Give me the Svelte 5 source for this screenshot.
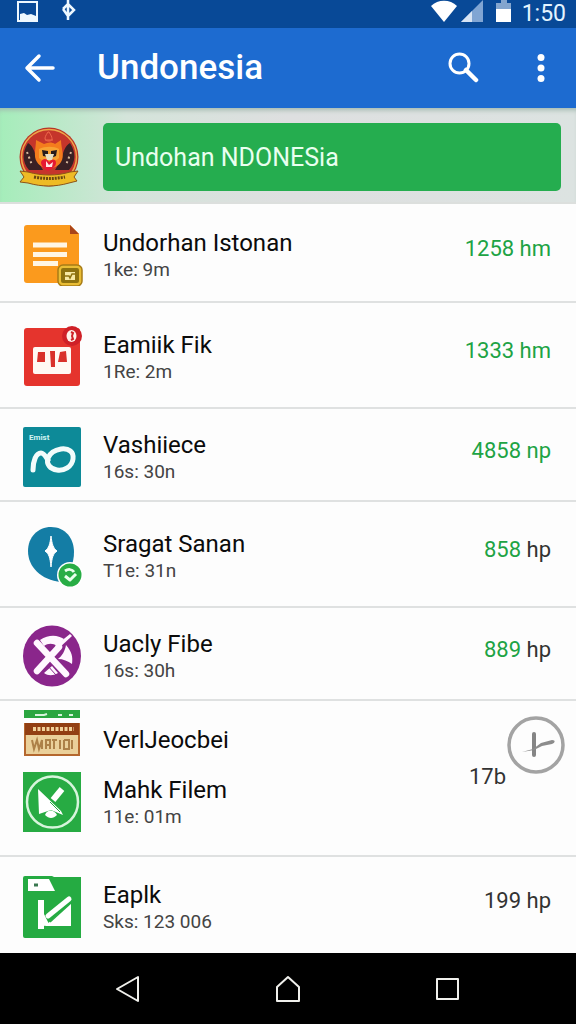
<script lang="ts">
	const items = [
		{ icon: "document", title: "Undorhan Istonan", detail: "1ke: 9m", amount: "1258", unit: "hm", tone: "green", size: "" },
		{ icon: "ticket", title: "Eamiik Fik", detail: "1Re: 2m", amount: "1333", unit: "hm", tone: "green", size: "roomy" },
		{ icon: "loop", title: "Vashiiece", detail: "16s: 30n", amount: "4858", unit: "np", tone: "green", size: "compact" },
		{ icon: "compass", title: "Sragat Sanan", detail: "T1e: 31n", amount: "858", unit: "hp", tone: "mixed", size: "roomy" },
		{ icon: "cross", title: "Uacly Fibe", detail: "16s: 30h", amount: "889", unit: "hp", tone: "mixed", size: "compact" },
	];
</script>

{#snippet appIcon(name: string)}
	<svg class="app-icon" viewBox="0 0 60 62" aria-hidden="true">
		{#if name === "document"}
			<path d="M4 1h43l9 9v49H4a3 3 0 0 1-3-3V4a3 3 0 0 1 3-3z" fill="#fb9a1d" />
			<path d="M47 1l9 9h-9z" fill="#a9441a" />
			<path d="M10 21h34M10 30.500h34M10 39.500h25" stroke="#fff6e4" stroke-width="5" />
			<rect x="35" y="41" width="24" height="21" rx="5" fill="#e9bd35" stroke="#a87c16" stroke-width="1.500" />
			<rect x="38" y="44" width="18" height="15" rx="2" fill="#8f7310" />
			<path d="M42 48h10v8H42z" fill="#f8eaa4" />
			<path d="M42 52h4l1 2 2-4h3" stroke="#8f7310" stroke-width="1.500" fill="none" />
		{:else if name === "ticket"}
			<rect x="1" y="2" width="56" height="58" rx="3" fill="#e5342d" />
			<rect x="10" y="21" width="38" height="27" rx="2" fill="#fff8f3" />
			<path d="M15 26h7v10h-8zM27 25h5v16h-4zM37 26l6-1 1 11h-9z" fill="#d9302a" />
			<circle cx="49" cy="10" r="10" fill="#cf2027" />
			<ellipse cx="48.500" cy="10" rx="5" ry="6" fill="#fff1ea" />
			<path d="M48 6l2 1-1 3 1 3-2 1" stroke="#cf2027" stroke-width="2" fill="none" />
		{:else if name === "loop"}
			<rect x="0" y="1" width="58" height="60" rx="2" fill="#0d8a98" />
			<text x="6" y="14" class="icon-text">Emist</text>
			<path d="M10 44c0-9 3-17 8-17 3 0 5 4 7 7" fill="none" stroke="#f3fcfb" stroke-width="5" stroke-linecap="round" />
			<path d="M38 23c8-1 13 3 12 10-1 8-9 12-16 11-7-1-11-6-9-12 2-5 7-8 13-9z" fill="none" stroke="#f3fcfb" stroke-width="5" />
		{:else if name === "compass"}
			<path d="M28 2c14 0 23 11 23 25 0 12-5 23-13 30C18 55 5 42 5 26 5 12 15 2 28 2z" fill="#147da5" />
			<path d="M28 11c1 8 2 12 6 15-4 3-5 6-6 16-1-10-2-13-6-16 4-3 5-7 6-15z" fill="#fff" stroke="#fff" />
			<circle cx="47" cy="50" r="13" fill="#fff" />
			<circle cx="47" cy="50" r="11.500" fill="#28ad45" />
			<path d="M42 46c3-2 7-2 9 1M42 51l5 4 6-6" fill="none" stroke="#eaffee" stroke-width="3" stroke-linejoin="round" />
		{:else if name === "cross"}
			<ellipse cx="29" cy="31" rx="29" ry="30.500" fill="#8a268b" />
			<path d="M17 15c9-6 18-5 24-1l-7 7c-4-3-9-3-13 0zM43 20c6 7 7 12 6 19-4-3-9-5-14-5 4-3 7-8 8-14zM21 48l8-7 6 7c-5 3-10 3-14 0z" fill="#fff7ff" />
			<path d="M14 18l29 31M36 22L14 46" stroke="#fff7ff" stroke-width="6.500" stroke-linecap="round" />
			<path d="M47 9l2 2-14 13-3-3z" fill="#fff7ff" />
			<path d="M24 40l9 10" stroke="#8a268b" stroke-width="1" />
		{:else if name === "sign"}
			<path d="M1 1h56v8H1z" fill="#2ba640" />
			<path d="M12 6h9l3-1M35 6h4M46 6h4" stroke="#d8f3dc" stroke-width="2" />
			<rect x="1" y="14" width="56" height="33" fill="#b4672e" />
			<rect x="2" y="14" width="54" height="12" fill="#923f13" />
			<path d="M10 20h41" stroke="#f2d29a" stroke-width="4" stroke-dasharray="3 1.500" />
			<rect x="3" y="26" width="52" height="19" fill="#ead09a" />
			<path d="M9 31l2 9 3-9 2 9 3-9v9M23 40v-9h4v9M23 36h4M31 31v9M29 31h5M37 31v9M41 31v9h5v-9h-5M49 31v9" stroke="#ad8148" stroke-width="2" fill="none" />
		{:else if name === "arrow"}
			<path d="M0 1h58v60H0z" fill="#27ab43" />
			<circle cx="29.500" cy="31" r="25.500" fill="none" stroke="#d7f5dc" stroke-width="2.500" />
			<path d="M15 18l23 22 2 4-12-5-12 4z" fill="#fff" />
			<path d="M30 29l9-11" stroke="#fff" stroke-width="6" />
			<path d="M27 31l10 10" stroke="#27ab43" stroke-width="1" />
			<path d="M22 44c2-6 9-6 12 0-4 4-8 4-12 0z" fill="#fff" />
		{:else if name === "folder"}
			<path d="M2 0h27l2 1h27v61H2a2 2 0 0 1-2-2V2a2 2 0 0 1 2-2z" fill="#25ab42" />
			<path d="M5 3h21l6 12H5z" fill="#fff" />
			<path d="M11 9h4" stroke="#3a7850" stroke-width="3" />
			<path d="M15 24h6v14l5 10-5 2v3h-6zM48 27v23H22z" fill="#fff" />
			<path d="M25 40L46 23" stroke="#fff" stroke-width="5" stroke-linecap="round" />
			<path d="M27 46l21-19" stroke="#25ab42" stroke-width="1.500" />
		{/if}
	</svg>
{/snippet}

<div class="screen">
	<div class="status-bar">
		<svg class="status-left" viewBox="0 0 64 24" aria-hidden="true">
			<rect x="2" y="2" width="19" height="19" fill="none" stroke="#eef8ff" stroke-width="2" />
			<path d="M4 20v-6l4-1 3 2 4-1 5 2v4z" fill="#eef8ff" />
			<path d="M52 0v20M47 9l5-5 6 6-6 6-5-7" fill="none" stroke="#eef8ff" stroke-width="2.500" />
		</svg>
		<div class="status-right">
			<svg class="status-signals" viewBox="0 0 84 24" aria-hidden="true">
				<path d="M1 6C8-1 20-1 27 6L14 22z" fill="#fff" />
				<path d="M53 0v22H31z" fill="#80a5d3" />
				<path d="M42 11v11H31z" fill="#d7e4f4" />
				<path d="M66 3h5V0h6v3h4v7H66z" fill="#83a5ce" />
				<path d="M66 9h15v13H66z" fill="#fff" />
			</svg>
			<span>1:50</span>
		</div>
	</div>

	<header class="app-bar">
		<button class="icon-btn" aria-label="Back">
			<svg width="32" height="32" viewBox="0 0 32 32"><path d="M29 16H4M15 4L3 16l12 12" fill="none" stroke="#fff" stroke-width="3.500" stroke-linecap="round" stroke-linejoin="round" /></svg>
		</button>
		<h1>Undonesia</h1>
		<button class="icon-btn" aria-label="Search">
			<svg width="32" height="32" viewBox="0 0 32 32"><circle cx="12.500" cy="11.500" r="9.500" fill="none" stroke="#fff" stroke-width="3" /><path d="M19 18l10 10" stroke="#fff" stroke-width="4.500" stroke-linecap="round" /></svg>
		</button>
		<button class="icon-btn" aria-label="More options">
			<svg width="32" height="32" viewBox="0 0 32 32" fill="#fff"><circle cx="16" cy="5.500" r="3.500" /><circle cx="16" cy="16" r="3.500" /><circle cx="16" cy="26.500" r="3.500" /></svg>
		</button>
	</header>

	<section class="banner">
		<svg class="emblem" viewBox="0 0 60 62" aria-hidden="true">
			<circle cx="30" cy="31" r="29.500" fill="#b93426" />
			<circle cx="30" cy="31" r="27.500" fill="#c5352b" stroke="#eda84b" stroke-width="1.500" />
			<path d="M9 17c4 2 7 8 8 15l7 12H10C3 36 3 26 9 17zM51 17c-4 2-7 8-8 15l-7 12h14c7-8 7-18 1-27z" fill="#392024" />
			<path d="M8 26l5 13M52 26l-5 13" stroke="#d7b99d" stroke-width="2" stroke-dasharray="2 3" />
			<path d="M29 6c-5 7-3 9 1 9s4-3 0-9zM26 14h8" fill="none" stroke="#ef694b" stroke-width="1" />
			<path d="M17 14l8 4c4-2 8-2 11 0l6-4c0 8 4 16 0 22-3 5-8 6-12 6s-9-1-12-6c-4-6-1-14-1-22z" fill="#f47c1d" />
			<path d="M20 23c6-3 15-3 20 0v9c-5 5-14 5-20 0z" fill="#f8a332" />
			<path d="M23 24l6 1v6l-5-1zM32 25l6-1-1 6-5 2z" fill="#281b1b" />
			<path d="M26 28h9l-2 6h-5z" fill="#e8e0c3" />
			<path d="M22 36c2-5 7-3 8 0 2-3 7-4 7 1 0 4-5 6-8 8-4-2-7-5-7-9z" fill="#e51932" />
			<path d="M27 35l3 4 4-3-1 5h-6z" fill="#ffe7e6" />
			<path d="M1 45l8 1c14 4 29 4 42 0l8-1-4 6 3 4-8 2c-14 4-27 4-41 0l-8-1 4-5z" fill="#eebb25" stroke="#8c5418" />
			<path d="M15 51c11 2 20 2 31 0" stroke="#684711" stroke-width="3" stroke-dasharray="2 1" fill="none" />
		</svg>
		<button class="banner-btn">Undohan NDONESia</button>
	</section>

	<ul class="downloads">
		{#each items as item}
			<li class="row {item.size}">
				{@render appIcon(item.icon)}
				<div class="info">
					<h2>{item.title}</h2>
					<p>{item.detail}</p>
				</div>
				<span class="amount {item.tone}"><b>{item.amount}</b> {item.unit}</span>
			</li>
		{/each}
		<li class="group">
			<div class="group-list">
				<div class="entry">
					{@render appIcon("sign")}
					<h2>VerlJeocbei</h2>
				</div>
				<div class="entry">
					{@render appIcon("arrow")}
					<div class="info">
						<h2>Mahk Filem</h2>
						<p>11e: 01m</p>
					</div>
				</div>
			</div>
			<span class="amount">17b</span>
			<button class="clock-btn" aria-label="Schedule">
				<svg width="60" height="60" viewBox="0 0 60 60" fill="none" aria-hidden="true">
					<circle cx="30" cy="30" r="27" stroke="#a3a3a3" stroke-width="3.500" />
					<path d="M28 19v21" stroke="#858585" stroke-width="4" stroke-linecap="round" />
					<path d="M16 37l11-3 8-6 11-3c4 0 3 3 0 4l-10 2-8 4z" fill="#8c8c8c" />
				</svg>
			</button>
		</li>
		<li class="row">
			{@render appIcon("folder")}
			<div class="info">
				<h2>Eaplk</h2>
				<p>Sks: 123 006</p>
			</div>
			<span class="amount">199 hp</span>
		</li>
	</ul>

	<nav class="nav-bar">
		<button aria-label="Navigate back">
			<svg width="28" height="28" viewBox="0 0 28 28"><path d="M24 2v24L3 14z" /></svg>
		</button>
		<button aria-label="Home">
			<svg width="28" height="28" viewBox="0 0 28 28"><path d="M14 2l11 10v14H3V12z" /></svg>
		</button>
		<button aria-label="Recent apps">
			<svg width="28" height="28" viewBox="0 0 28 28"><path d="M3 4h21v20H3z" /></svg>
		</button>
	</nav>
</div>

<style>
	:global(body) {
		background: #fdfdfd;
	}

	.screen {
		display: flex;
		flex-direction: column;
		min-height: 100vh;
		font-family: Roboto, "Liberation Sans", sans-serif;
		color: #0b0b0b;
	}

	h1,
	h2,
	p,
	ul {
		margin: 0;
		padding: 0;
	}

	button {
		border: none;
		padding: 0;
		background: none;
		font-family: inherit;
		cursor: pointer;
	}

	svg {
		display: block;
		flex: none;
	}

	.status-bar {
		display: flex;
		justify-content: space-between;
		height: 28px;
		padding: 0 10px 0 16px;
		background: #084997;
		color: #e4f4ff;
		font-size: 23px;
		line-height: 28px;
	}

	.status-left {
		width: 64px;
		height: 24px;
	}

	.status-right {
		display: flex;
		gap: 8px;
	}

	.status-signals {
		width: 84px;
		height: 24px;
	}

	.app-bar {
		display: flex;
		align-items: center;
		height: 80px;
		padding: 0 11px 0 16px;
		background: #1d6bd0;
	}

	.app-bar h1 {
		flex: 1;
		padding-left: 33px;
		font-size: 35px;
		font-weight: 500;
		line-height: 40px;
		color: #fff;
	}

	.icon-btn {
		display: grid;
		place-items: center;
		width: 48px;
		height: 48px;
	}

	.icon-btn + .icon-btn {
		margin-left: 30px;
	}

	.banner {
		display: flex;
		align-items: center;
		gap: 24px;
		height: 96px;
		box-sizing: border-box;
		padding: 8px 15px 4px 19px;
		border-bottom: 2px solid #dcdfdd;
		background: linear-gradient(90deg, #a5edba, #d4e4da 22%, #dedfe0 50%, #dce3e1);
		box-shadow: inset 0 5px 5px -3px #a0b8ae;
	}

	.emblem {
		width: 60px;
		height: 62px;
	}

	.banner-btn {
		flex: 1;
		height: 68px;
		padding: 0 12px;
		border-radius: 5px;
		background: #25ad4f;
		color: #e9fff0;
		font-size: 25px;
		text-align: left;
	}

	.downloads {
		display: flex;
		flex: 1;
		flex-direction: column;
		list-style: none;
	}

	.row {
		display: flex;
		align-items: center;
		min-height: 99px;
		box-sizing: border-box;
		padding: 4px 25px 0 23px;
		border-bottom: 2px solid #dfe1e1;
	}

	.row.roomy {
		min-height: 106px;
	}

	.row.compact {
		min-height: 93px;
	}

	.row:last-child {
		flex: 1;
		min-height: 96px;
		border-bottom: none;
	}

	.app-icon {
		width: 60px;
		height: 62px;
	}

	.icon-text {
		fill: #d2f5f3;
		font-size: 8px;
		font-weight: 700;
	}

	.info {
		flex: 1;
		padding: 2px 20px 0;
	}

	h2 {
		font-size: 24px;
		font-weight: 400;
		line-height: 28px;
	}

	p {
		font-size: 19px;
		line-height: 26px;
		color: #444;
	}

	.amount {
		padding-bottom: 12px;
		font-size: 22px;
		line-height: 28px;
		color: #333;
	}

	.amount b {
		font-weight: 400;
	}

	.green,
	.mixed b {
		color: #20a344;
	}

	.group {
		display: flex;
		align-items: flex-start;
		min-height: 156px;
		box-sizing: border-box;
		padding: 8px 10px 0 23px;
		border-bottom: 2px solid #dfe1e1;
	}

	.group-list {
		display: flex;
		flex: 1;
		flex-direction: column;
	}

	.entry {
		display: flex;
		align-items: center;
	}

	.entry > h2 {
		padding: 0 20px;
	}

	.group .amount {
		padding-top: 54px;
	}

	.clock-btn {
		margin-top: 6px;
	}

	.nav-bar {
		display: flex;
		align-items: center;
		justify-content: center;
		gap: 112px;
		height: 71px;
		background: #000;
	}

	.nav-bar button {
		display: grid;
		place-items: center;
		width: 48px;
		height: 48px;
	}

	.nav-bar path {
		fill: none;
		stroke: #f0f0ec;
		stroke-width: 2;
		stroke-linejoin: round;
	}
</style>
